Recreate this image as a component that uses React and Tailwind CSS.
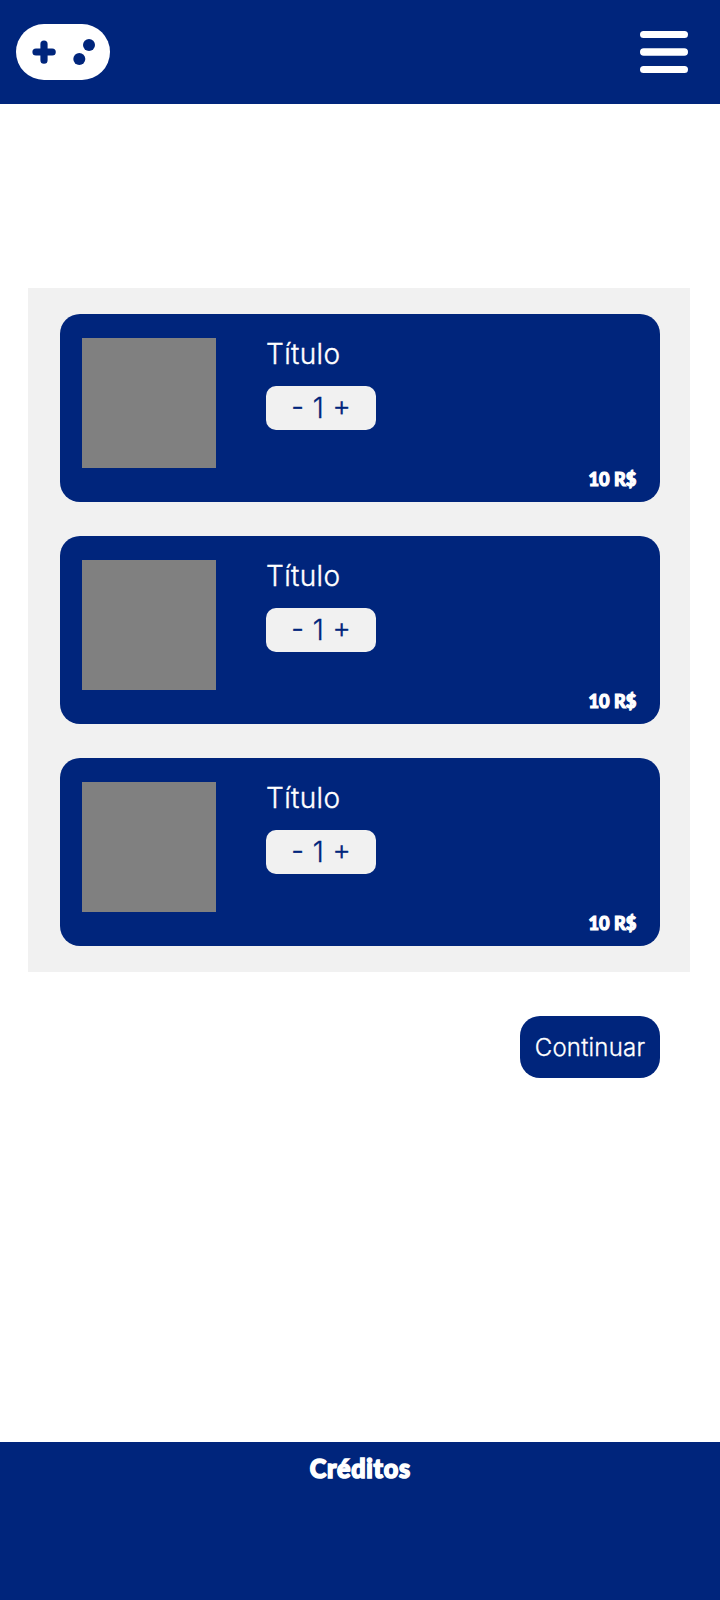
const items = [
  { title: "Título", quantity: 1, price: "10 R$" },
  { title: "Título", quantity: 1, price: "10 R$" },
  { title: "Título", quantity: 1, price: "10 R$" },
];

function Header() {
  return (
    <header className="flex h-[104px] shrink-0 items-center justify-between bg-[#00257c] pr-8 pl-4">
      <svg className="h-14 w-[94px]" viewBox="0 0 94 56" aria-label="Início">
        <rect width="94" height="56" rx="28" fill="#fff" />
        <path d="M28 20v16.2M20 28h16.2" stroke="#00257c" strokeWidth="7.2" strokeLinecap="round" />
        <circle cx="73" cy="21" r="6" fill="#00257c" />
        <circle cx="63.3" cy="35" r="6" fill="#00257c" />
      </svg>
      <button aria-label="Menu" className="w-12">
        <svg className="h-[42px] w-12" viewBox="0 0 48 42" fill="#fff">
          <rect width="48" height="7" rx="3.5" />
          <rect y="17.25" width="48" height="7.5" rx="3.75" />
          <rect y="35" width="48" height="7" rx="3.5" />
        </svg>
      </button>
    </header>
  );
}

function CartItem({ title, quantity, price }) {
  return (
    <article className="flex h-[188px] rounded-[20px] bg-[#00257c] pt-6 pr-6 pl-[22px]">
      <div className="h-[130px] w-[134px] bg-[#808080]" />
      <div className="ml-[50px] flex flex-col items-start">
        <h2 className="h-12 text-[28px] leading-[32px] font-light tracking-[0.35px] text-white [-webkit-text-stroke:0.35px_white]">{title}</h2>
        <div className="flex h-11 w-[110px] items-center justify-center gap-[8.7px] rounded-[10px] bg-[#f1f1f1] text-[28px] font-light text-[#00257c] [-webkit-text-stroke:0.35px_#00257c] [font-feature-settings:'case']">
          <button>-</button>
          <span>{quantity}</span>
          <button>+</button>
        </div>
      </div>
      <div className="mb-[11px] ml-auto flex origin-right scale-x-[0.93] items-end font-[Lato] text-[19.5px] leading-6 font-black text-white [-webkit-text-stroke:1.2px_white]">
        {price}
      </div>
    </article>
  );
}

export default function App() {
  return (
    <div className="flex h-[1600px] w-[720px] flex-col bg-white font-[Inter,sans-serif]">
      <Header />
      <main className="flex flex-1 flex-col pt-[184px]">
        <section className="mr-[30px] ml-7 flex h-[684px] flex-col gap-[34px] bg-[#f1f1f1] pt-[26px] pr-[30px] pl-8">
          {items.map((item, i) => (
            <CartItem key={i} {...item} />
          ))}
        </section>
        <button className="mt-11 mr-[60px] flex h-[62px] w-[140px] items-center justify-center self-end rounded-[20px] bg-[#00257c] pt-0.5 text-2xl font-light tracking-[0.2px] text-white [-webkit-text-stroke:0.3px_white]">
          Continuar
        </button>
      </main>
      <footer className="flex h-[158px] shrink-0 justify-center bg-[#00257c] pt-[10px] font-[Lato] text-[27px] leading-8 font-black text-white [-webkit-text-stroke:1.6px_white]">
        <span className="scale-x-[0.93] tracking-[0.8px]">Créditos</span>
      </footer>
    </div>
  );
}
